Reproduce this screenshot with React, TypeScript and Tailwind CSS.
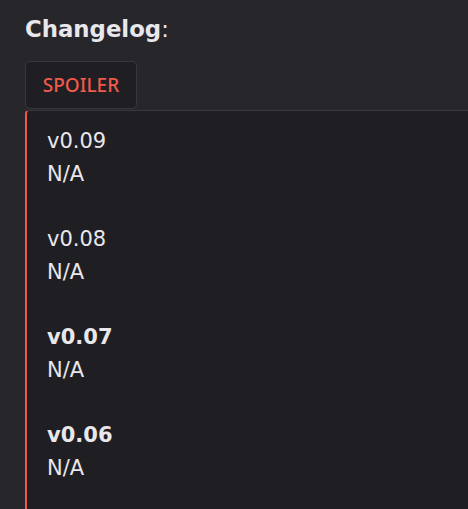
import React from 'react';

const entries = [
  { version: 'v0.09', bold: false },
  { version: 'v0.08', bold: false },
  { version: 'v0.07', bold: true },
  { version: 'v0.06', bold: true },
];

const App: React.FC = () => {
  return (
    <div className="min-h-[509px] w-[468px] overflow-hidden bg-[#27262b] pl-[25px] pt-[14px] font-['DejaVu_Sans',sans-serif] text-[#e8e7ec]">
      <h2 className="text-[22.8px] font-bold leading-[30px]">
        Changelog<span className="font-normal">:</span>
      </h2>
      <button className="mt-[17px] flex h-[48px] w-[112px] items-center justify-center rounded-[5px] border border-[#38373d] bg-[#1f1e22] font-['Noto_Sans',sans-serif] text-[19px] font-medium text-[#ef5a4d]">
        SPOILER
      </button>
      <div className="mt-[1px] min-h-[400px] w-[460px] rounded-tl-[4px] border-t border-l-2 border-t-[#3a393e] border-l-[#f0574b] bg-[#1f1e23] pl-[20px] pt-[14px] text-[21px]">
        {entries.map((e) => (
          <div key={e.version} className="leading-[32.7px]">
            <div className={e.bold ? 'font-bold' : ''}>{e.version}</div>
            <div>N/A</div>
            <div>&nbsp;</div>
          </div>
        ))}
      </div>
    </div>
  );
};

export default App;
